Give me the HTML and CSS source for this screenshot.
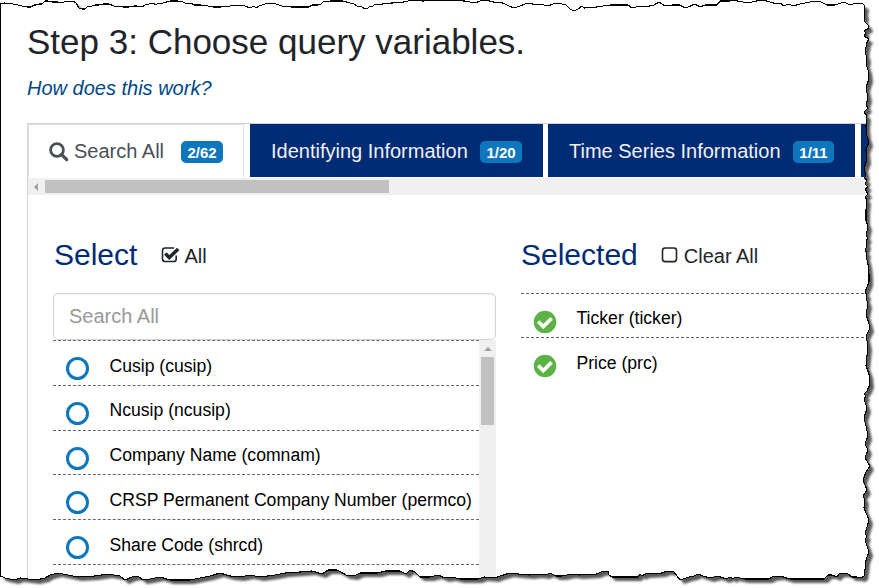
FILE: index.html
```html
<!DOCTYPE html>
<html lang="en">
<head>
<meta charset="utf-8">
<title>Choose query variables</title>
<link rel="stylesheet" href="styles.css">
</head>
<body>
<svg class="defs" width="0" height="0" aria-hidden="true">
  <symbol id="check-circle" viewBox="0 0 24 24">
    <circle cx="12" cy="12" r="11.3" fill="#5bb346"/>
    <path d="M5.2 11.6l5 5 8.400-8.200" fill="none" stroke="#fff" stroke-width="3.6"/>
  </symbol>
</svg>
<main class="page">
  <h1 class="title"><span>Step 3: Choose query variables.</span></h1>
  <p class="help"><a>How does this work?</a></p>
  <section class="panel">
    <nav class="tabs">
      <div class="tab active">
        <svg class="magnifier" viewBox="0 0 20 20"><circle cx="8" cy="8" r="6.4" fill="none" stroke="#495057" stroke-width="2.8"/><path d="M12.5 12.5l5.2 5.2" stroke="#495057" stroke-width="3.2" stroke-linecap="round"/></svg>
        <span class="label">Search All</span><span class="badge">2/62</span>
      </div>
      <div class="tab t2"><span class="label">Identifying Information</span><span class="badge">1/20</span></div>
      <div class="tab t3"><span class="label">Time Series Information</span><span class="badge">1/11</span></div>
      <div class="tab t4"></div>
    </nav>
    <div class="hscroll"><i class="arrow-left"></i><i class="hthumb"></i></div>
    <div class="columns">
      <div class="col-left">
        <header class="head">
          <h2>Select</h2>
          <svg class="box" viewBox="0 0 20 18"><path d="M15.2 9.5v3.4q0 2.6-2.6 2.6H4.1q-2.6 0-2.6-2.6V4.6Q1.500 2 4.100 2H13" fill="none" stroke="#212529" stroke-width="1.6"/><path d="M4.300 7.500l4 4L17.200 3" fill="none" stroke="#212529" stroke-width="3.500"/></svg>
          <span class="head-label">All</span>
        </header>
        <div class="search">Search All</div>
        <div class="scroller">
          <ul class="list">
            <li><i class="ring"></i><span>Cusip (cusip)</span></li>
            <li><i class="ring"></i><span>Ncusip (ncusip)</span></li>
            <li><i class="ring"></i><span>Company Name (comnam)</span></li>
            <li><i class="ring"></i><span>CRSP Permanent Company Number (permco)</span></li>
            <li><i class="ring"></i><span>Share Code (shrcd)</span></li>
            <li></li>
          </ul>
          <div class="vscroll"><i class="arrow-up"></i><i class="vthumb"></i></div>
        </div>
      </div>
      <div class="col-right">
        <header class="head">
          <h2>Selected</h2>
          <svg class="box" viewBox="0 0 20 18"><rect x="1.5" y="2" width="14" height="13.600" rx="2.600" fill="none" stroke="#212529" stroke-width="1.600"/></svg>
          <span class="head-label">Clear All</span>
        </header>
        <ul class="list">
          <li><svg class="check"><use href="#check-circle"/></svg><span>Ticker (ticker)</span></li>
          <li><svg class="check"><use href="#check-circle"/></svg><span>Price (prc)</span></li>
        </ul>
      </div>
    </div>
  </section>
</main>
<svg class="torn" viewBox="0 0 879 588" aria-hidden="true">
  <defs>
    <path id="edge" d="M.5 4L4 3 13 4 18 5 22 6 27 7 31 7 34 5 36 5 39 4 42 4 45 1 48 1 52 2 58 2 62 3 66 1 69 2 73 1 76 3 79 8 82 9 85 9 87 7 92 6 95 5 99 5 103 4 109 4 114 6 116 7 118 6 123 7 129 7 134 6 137 6 142 7 145 5 149 4 154 3 155 5 157 4 163 3 170 1 178 1 183 2 187 4 191 3 194 5 200 5 208 6 213 7 221 7 230 6 237 5 245 6 250 8 254 6 256 8 259 6 265 4 269 3 276 4 279 5 282 6 291 7 300 7 309 7 312 5 318 5 321 4 323 2 330 1 343 1 350 3 354 4 357 6 362 7 365 9 368 8 370 6 372 7 374 5 382 4 392 3 404 2 408 1 416 0 422 1 440 .5 465 1 475 3 480 1 483 .5 490 1 497 3 500 2 505 4 509 6 514 8 520 6 525 4 530 3 535 5 540 4 548 6 553 4 558 3 566 5 570 9 574 11 578 9 582 6 584 8 597 7 603 6 610 5 628 5 632 8 640 6 645 7 654 5 659 2 665 6 672 5 680 5 685 8 688 7 695 4 700 7 705 5 717 5 720 1 730 1 733 .5 738 1 743 2 748 3 756 1 765 .5 770 2 777 4 781 3 783 6 789 4 793 6 800 4 815 1 821 2 827 5 835 5 844 2 850 5 856 3 863 4 865 6 864 12 865 15 864 20 865 22 868 25 869 28 864 31 866 33 864 36 869 39 866 44 867 46 865 48 866 50 865 52 867 58 866 64 868 70 869 78 866 88 868 98 866 105 868 108 864 112 867 116 866 126 867 136 869 142 866 150 867 160 864 168 866 176 864 178 867 180 865 184 868 187 865 189 868 194 865 197 867 200 866 210 866 221 868 226 866 236 868 238 866 241 867 246 865 250 867 253 866 256 868 264 869 274 869 282 865 292 867 295 866 298 868 304 866 314 869 324 870 328 866 336 868 346 866 366 869 374 870 384 867 391 864 394 866 396 864 399 867 408 864 418 866 426 868 436 865 444 868 450 865 458 870 466 866 472 863 480 867 490 863 496 865 500 864 508 869 520 865 534 867 536 865 540 867 546 869 552 866 560 865 570 864 576 861 578 857 577 852 577 848 574 843 573 839 574 837 577 832 575 828 575 824 579 790 579 780 576 772 577 769 579 745 579 735 577 733 579 730 577 726 579 718 576 710 578 703 576 698 574 694 576 689 577 680 580 674 572 667 571 662 573 645 574 642 576 640 574 638 577 612 577 609 575 608 571 601 572 597 574 579 575 572 574 562 576 556 576 550 573 546 575 538 574 530 575 518 574 510 573 500 576 495 578 484 577 478 579 460 579 452 577 445 578 438 575 430 577 420 577 415 572 410 570 406 574 400 571 385 571 378 573 360 573 354 576 346 575 341 572 337 570 328 570 322 574 312 571 300 572 285 573 275 575 260 577 250 575 240 577 230 576 220 573 210 576 200 578 190 580 170 580 160 577 150 579 143 580 138 576 132 577 125 580 120 576 108 574 95 576 78 577 68 575 58 573 50 575 45 578 36 580 20 578 15 580 5 578 .5 576Z"/>
    <filter id="soft" x="-5%" y="-5%" width="110%" height="110%"><feGaussianBlur stdDeviation="1.1"/></filter>
    <mask id="outside"><rect width="879" height="588" fill="#fff"/><use href="#edge" fill="#000"/></mask>
  </defs>
  <g mask="url(#outside)">
    <rect width="879" height="588" fill="#fff"/>
    <use href="#edge" transform="translate(4 4)" fill="#5a5a5a" filter="url(#soft)"/>
  </g>
  <use href="#edge" fill="none" stroke="#000" stroke-width="1.1" shape-rendering="crispEdges"/>
</svg>
</body>
</html>
```
FILE: styles.css
```css
* { box-sizing: border-box; }
body {
  margin: 0;
  width: 879px;
  height: 588px;
  overflow: hidden;
  background: #fff;
  color: #212529;
  font-family: "Liberation Sans", Arial, sans-serif;
}
h1, h2, p, ul { margin: 0; padding: 0; font-weight: 400; }
ul { list-style: none; }
span, a { white-space: nowrap; }
.defs { position: absolute; }
.page { padding: 21px 0 0 27px; height: 588px; overflow: hidden; }
.title { height: 43px; font-size: 35px; line-height: 42px; }
.help { height: 59px; padding-top: 10px; font-size: 20px; line-height: 28px; font-style: italic; color: #004785; }
.panel { width: 852px; height: 470px; border: 1px solid #ced4da; border-right: 0; }
.tabs { display: flex; height: 54px; }
.tab { display: flex; align-items: center; flex: none; height: 53px; background: #002b75; color: #f0f0f0; font-size: 20px; padding: 0 21px; }
.label { flex: none; line-height: 28px; }
.active { width: 216px; margin-right: 6px; padding: 0 20px; background: #fff; color: #495057; border: 1px solid #dee2e6; border-bottom: 0; }
.t2 { width: 293px; margin-right: 5px; }
.t3 { width: 307px; margin-right: 6px; }
.t4 { width: 18px; padding: 0; }
.magnifier { width: 20px; height: 20px; margin: 2px 5px 0 0; flex: none; }
.badge { margin-left: auto; padding: 0 6.3px; height: 22px; border-radius: 5px; background: #0d76bd; color: #fff; font-size: 15px; line-height: 23px; font-weight: 700; position: relative; top: 1px; }
.hscroll { display: flex; align-items: center; height: 17px; background: #f0f0f0; }
.arrow-left { margin: 0 7px 0 6px; border: 4px solid transparent; border-right-color: #a0a0a0; border-left: 0; }
.hthumb { width: 344px; height: 13px; background: #c1c1c1; }
.columns { display: flex; padding-left: 25px; }
.col-left { width: 443px; margin-right: 25px; }
.col-right { width: 358px; }
.head { display: flex; height: 98px; padding-top: 40px; }
.col-left .head { padding-left: 1px; }
.head h2 { font-size: 30px; line-height: 40px; color: #002b75; }
.box { width: 20px; height: 18px; flex: none; margin: 11px 3px 0 24px; }
.col-right .box { margin-left: 23px; }
.head-label { font-size: 20px; line-height: 28px; padding-top: 7px; }
.search { height: 47px; padding-left: 15px; border: 1px solid #ced4da; border-radius: 5px; box-shadow: inset 0 1px 2px #0001; font-size: 20px; line-height: 44px; color: #999; }
.scroller { display: flex; height: 248px; }
.list { width: 426px; color: #000; font-size: 17.6px; }
.list li { display: flex; height: 44.75px; border-top: 1px dashed #666; }
.list span { line-height: 24px; padding-top: 12.7px; }
.ring { flex: none; width: 23px; height: 23px; margin: 16px 21px 0 12.500px; border: 3px solid #0d76bd; border-radius: 50%; }
.vscroll { display: flex; flex-direction: column; align-items: center; width: 17px; background: #f0f0f0; }
.arrow-up { margin: 7px 0 6px; border: 4px solid transparent; border-bottom-color: #a0a0a0; border-top: 0; }
.vthumb { width: 13px; height: 68px; background: #c1c1c1; }
.col-right .list { width: 358px; }
.col-right .list li { height: 44.3px; }
.col-right .list span { padding-top: 12.300px; }
.check { width: 24px; height: 24px; margin: 15.500px 20px 0 11.500px; flex: none; }
.torn { position: absolute; top: 0; left: 0; width: 879px; height: 588px; }
```
